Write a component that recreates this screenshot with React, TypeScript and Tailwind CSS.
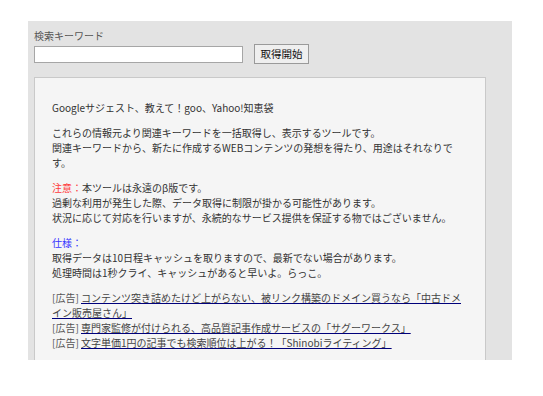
import React from 'react';

const ads = [
  'コンテンツ突き詰めたけど上がらない、被リンク構築のドメイン買うなら「中古ドメイン販売屋さん」',
  '専門家監修が付けられる、高品質記事作成サービスの「サグーワークス」',
  '文字単価1円の記事でも検索順位は上がる！「Shinobiライティング」',
];

export default function App() {
  return (
    <div className="min-h-[396px] bg-white pt-[21px] pl-[28px] font-['Noto_Sans_CJK_JP','Noto_Sans',sans-serif]">
      <div className="h-[339px] w-[484px] overflow-hidden bg-[#e3e3e3] pt-[7px] pl-[6px]">
        <div className="h-[15px] text-[10px] leading-[15px] text-[#555]">検索キーワード</div>
        <div className="mt-px flex items-center gap-[11px]">
          <input
            type="text"
            className="h-[17px] w-[209px] border border-[#a6a6a6] bg-white outline-none"
          />
          <button
            type="button"
            className="h-[20px] w-[55px] border border-[#9a9a9a] bg-[#efefef] text-[10.5px] leading-[18px] text-[#111]"
          >
            取得開始
          </button>
        </div>

        <div className="mt-[13px] w-[452px] border border-[#c9c9c9] bg-[#f5f5f5] px-[17px] pt-[22px] pb-[40px] text-[10px] leading-[15px] text-[#333]">
          <p>Googleサジェスト、教えて！goo、Yahoo!知恵袋</p>
          <p className="mt-[10px]">
            これらの情報元より関連キーワードを一括取得し、表示するツールです。
            <br />
            関連キーワードから、新たに作成するWEBコンテンツの発想を得たり、用途はそれなりです。
          </p>
          <p className="mt-[10px]">
            <span className="text-[#ff3b3b]">注意：</span>本ツールは永遠のβ版です。
            <br />
            過剰な利用が発生した際、データ取得に制限が掛かる可能性があります。
            <br />
            状況に応じて対応を行いますが、永続的なサービス提供を保証する物ではございません。
          </p>
          <p className="mt-[10px]">
            <span className="text-[#3535ff]">仕様：</span>
            <br />
            取得データは10日程キャッシュを取りますので、最新でない場合があります。
            <br />
            処理時間は1秒クライ、キャッシュがあると早いよ。らっこ。
          </p>
          <div className="mt-[10px]">
            {ads.map((ad) => (
              <div key={ad}>
                <span className="text-[#555]">[広告] </span>
                <a href="#" className="text-[#444] underline decoration-[#00007a]">
                  {ad}
                </a>
              </div>
            ))}
          </div>
        </div>
      </div>
    </div>
  );
}
